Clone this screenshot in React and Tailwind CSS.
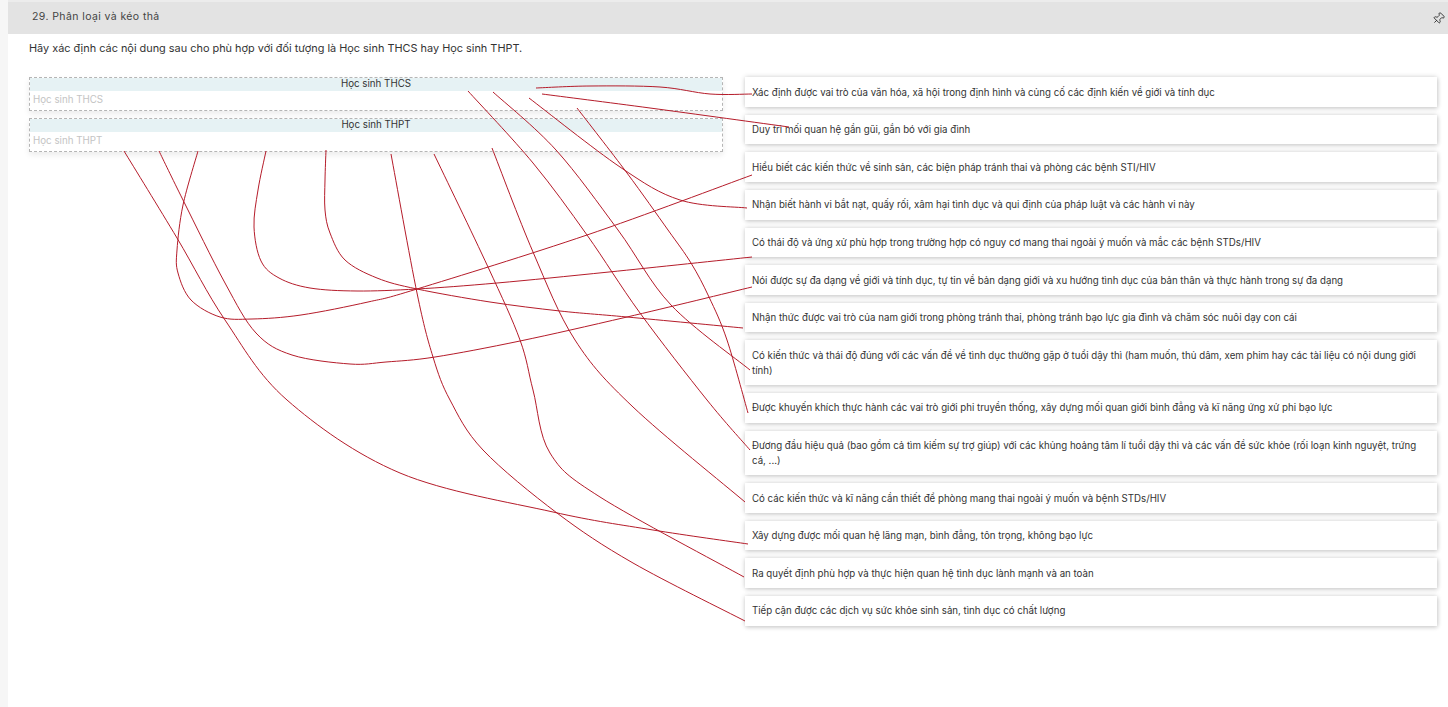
import React from "react";
import { Pin } from "lucide-react";

const font = "font-['Inter','Liberation_Sans',sans-serif]";

const items = [
  "Xác định được vai trò của văn hóa, xã hội trong định hình và củng cố các định kiến về giới và tính dục",
  "Duy trì mối quan hệ gần gũi, gắn bó với gia đình",
  "Hiểu biết các kiến thức về sinh sản, các biện pháp tránh thai và phòng các bệnh STI/HIV",
  "Nhận biết hành vi bắt nạt, quấy rối, xâm hại tình dục và qui định của pháp luật và các hành vi này",
  "Có thái độ và ứng xử phù hợp trong trường hợp có nguy cơ mang thai ngoài ý muốn và mắc các bệnh STDs/HIV",
  "Nói được sự đa dạng về giới và tính dục, tự tin về bản dạng giới và xu hướng tình dục của bản thân và thực hành trong sự đa dạng",
  "Nhận thức được vai trò của nam giới trong phòng tránh thai, phòng tránh bạo lực gia đình và chăm sóc nuôi dạy con cái",
  "Có kiến thức và thái độ đúng với các vấn đề về tình dục thường gặp ở tuổi dậy thì (ham muốn, thủ dâm, xem phim hay các tài liệu có nội dung giới tính)",
  "Được khuyến khích thực hành các vai trò giới phi truyền thống, xây dựng mối quan giới bình đẳng và kĩ năng ứng xử phi bạo lực",
  "Đương đầu hiệu quả (bao gồm cả tìm kiếm sự trợ giúp) với các khủng hoảng tâm lí tuổi dậy thì và các vấn đề sức khỏe (rối loạn kinh nguyệt, trứng cá, ...)",
  "Có các kiến thức và kĩ năng cần thiết để phòng mang thai ngoài ý muốn và bệnh STDs/HIV",
  "Xây dựng được mối quan hệ lãng mạn, bình đẳng, tôn trọng, không bạo lực",
  "Ra quyết định phù hợp và thực hiện quan hệ tình dục lành mạnh và an toàn",
  "Tiếp cận được các dịch vụ sức khỏe sinh sản, tình dục có chất lượng",
];

const lines = [
  [[536, 88], [590, 86], [660, 87], [710, 94], [752, 94]],
  [[542, 94], [650, 108], [789, 127]],
  [[752, 175], [587, 235], [417, 289], [368, 302], [301, 315], [252, 319], [220, 317], [191, 300], [178, 273], [177, 250], [183, 205], [198, 151]],
  [[752, 257], [609, 272], [497, 283], [417, 289], [357, 291], [310, 288], [279, 278], [261, 261], [254, 227], [258, 190], [266, 151]],
  [[752, 287], [627, 317], [520, 341], [435, 357], [386, 362], [350, 364], [292, 355], [256, 333], [225, 283], [183, 200], [159, 151]],
  [[743, 328], [627, 317], [560, 311], [490, 302], [417, 289], [377, 278], [345, 260], [330, 233], [325, 210], [325, 180], [326, 150]],
  [[391, 154], [417, 293], [433, 357], [450, 400], [483, 450], [557, 513], [633, 563], [745, 621]],
  [[124, 151], [177, 238], [225, 320], [287, 400], [400, 473], [553, 512], [653, 530], [748, 544]],
  [[434, 154], [488, 267], [520, 340], [533, 390], [550, 453], [600, 497], [744, 577]],
  [[492, 148], [533, 252], [575, 340], [633, 407], [745, 502]],
  [[468, 91], [533, 163], [587, 235], [640, 313], [707, 400], [750, 450]],
  [[493, 92], [556, 150], [618, 230], [671, 305], [750, 370]],
  [[529, 98], [620, 167], [680, 200], [747, 208]],
  [[577, 108], [627, 173], [668, 230], [691, 263], [709, 297], [727, 340], [748, 413]],
];

// catmull-rom through the points, written out as cubic beziers
function toPath(pts) {
  let d = `M${pts[0][0]} ${pts[0][1]}`;
  for (let i = 0; i < pts.length - 1; i++) {
    const p0 = pts[i - 1] || pts[i];
    const p1 = pts[i];
    const p2 = pts[i + 1];
    const p3 = pts[i + 2] || p2;
    const c1 = [p1[0] + (p2[0] - p0[0]) / 6, p1[1] + (p2[1] - p0[1]) / 6];
    const c2 = [p2[0] - (p3[0] - p1[0]) / 6, p2[1] - (p3[1] - p1[1]) / 6];
    d += ` C${c1[0]} ${c1[1]} ${c2[0]} ${c2[1]} ${p2[0]} ${p2[1]}`;
  }
  return d;
}

function DropBox({ label }) {
  return (
    <div className="border border-dashed border-[#b5b5b5] shadow-[0_3px_6px_rgba(0,0,0,0.08)]">
      <div className="h-[13px] bg-[#e6f2f4] text-center text-[9.75px] leading-[12px] text-[#333]">{label}</div>
      <div className="h-[19px] pl-[3px] text-[9.75px] leading-[18.5px] text-[#c4c4c4]">{label}</div>
    </div>
  );
}

export default function App() {
  return (
    <div className={`relative h-[707px] w-[1448px] overflow-hidden bg-[#f6f6f6] pl-2 ${font}`}>
      <div className="h-full bg-white">
        <div className="flex h-[34px] items-center justify-between border-t-2 border-[#ececec] bg-[#e3e3e3] pb-[2px] pl-6 pr-[3px]">
          <span className="text-[10.5px] tracking-[0.4px] text-[#444]">29. Phân loại và kéo thả</span>
          <Pin size={13} strokeWidth={1.5} className="mt-[3px] rotate-45 text-[#222]" />
        </div>
        <p className="pl-[21px] pt-[7px] text-[10.9px] leading-[14px] text-[#333]">
          Hãy xác định các nội dung sau cho phù hợp với đối tượng là Học sinh THCS hay Học sinh THPT.
        </p>
        <div className="flex pl-[21px] pr-[11px] pt-[22.3px]">
          <div className="flex w-[694px] flex-col gap-[7px]">
            <DropBox label="Học sinh THCS" />
            <DropBox label="Học sinh THPT" />
          </div>
          <div className="ml-[22px] flex flex-1 flex-col gap-[8px]">
            {items.map((t) => (
              <div
                key={t}
                className="bg-white px-[7px] py-[7.3px] text-[9.7px] leading-[15px] text-[#333] shadow-[0_0_5px_rgba(0,0,0,0.18),1px_2px_4px_rgba(0,0,0,0.1)]"
              >
                {t}
              </div>
            ))}
          </div>
        </div>
      </div>
      <svg className="absolute left-0 top-0" width="1448" height="707" fill="none" stroke="#b51c2a" strokeWidth="1">
        {lines.map((pts, i) => (
          <path key={i} d={toPath(pts)} />
        ))}
      </svg>
    </div>
  );
}
